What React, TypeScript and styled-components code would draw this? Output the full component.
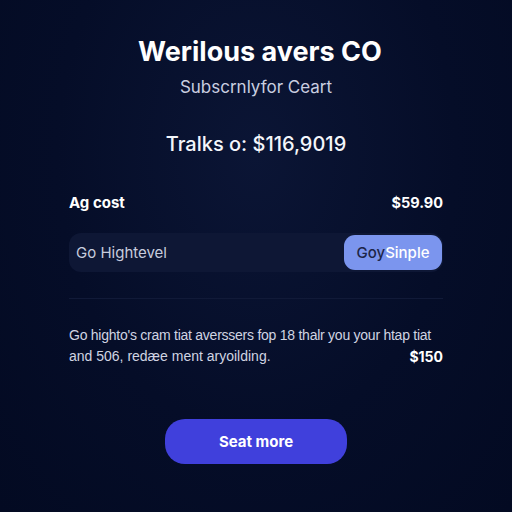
import React from "react";
import styled, { createGlobalStyle } from "styled-components";

const Global = createGlobalStyle`
  html, body { margin: 0; padding: 0; background: #030b25; }
  body { font-family: Inter, "Open Sans", "Liberation Sans", sans-serif; }
`;

const Page = styled.div`
  width: 512px;
  height: 512px;
  box-sizing: border-box;
  padding-top: 35px;
  display: flex;
  flex-direction: column;
  align-items: center;
  background: radial-gradient(ellipse at 50% 30%, #0b1535 0%, #050d28 55%, #030a22 100%);
  color: #ffffff;
`;

const Title = styled.h1`
  margin: 0 0 0 8px;
  font-size: 27px;
  line-height: 34px;
  font-weight: 700;
  color: #ffffff;
`;

const Subtitle = styled.div`
  margin-top: 6px;
  font-size: 17px;
  line-height: 24px;
  color: #c9cee0;
`;

const Total = styled.div`
  margin-top: 33px;
  font-size: 20px;
  line-height: 24px;
  font-weight: 500;
  color: #f4f6fb;
`;

const Section = styled.div`
  width: 374px;
  display: flex;
  flex-direction: column;
`;

const Row = styled.div<{ $top: number }>`
  margin-top: ${(p) => p.$top}px;
  display: flex;
  justify-content: space-between;
  align-items: flex-end;
  font-size: 15px;
  line-height: 20px;
`;

const Label = styled.span`
  font-weight: 700;
  color: #ffffff;
`;

const Amount = styled.span<{ $size?: number }>`
  font-family: Inter, "Liberation Sans", sans-serif;
  font-weight: 700;
  font-size: ${(p) => p.$size ?? 14.5}px;
  letter-spacing: 0;
  color: #ffffff;
`;

const Field = styled.div`
  margin-top: 20px;
  height: 39px;
  border-radius: 12px;
  background: #0e1735;
  display: flex;
  align-items: center;
  justify-content: space-between;
  padding: 0 1px 0 7px;
`;

const FieldText = styled.span`
  font-size: 15px;
  color: #c7ccdd;
`;

const FieldButton = styled.button`
  height: 35px;
  width: 98px;
  border: none;
  border-radius: 11px;
  background: #7b95ee;
  font-family: inherit;
  font-size: 15px;
  font-weight: 500;
  color: #ffffff;
  padding: 0;
`;

const Dark = styled.span`
  color: #1d2547;
`;

const Divider = styled.hr`
  margin: 26px 0 0;
  border: none;
  height: 1px;
  background: #111a38;
`;

const Paragraph = styled.div`
  margin-top: 26px;
  font-family: "Liberation Sans", Arial, sans-serif;
  font-size: 14px;
  line-height: 21px;
  white-space: nowrap;
  color: #d0d4e2;
`;

const FirstLine = styled.div`
  letter-spacing: -0.25px;
`;

const LastLine = styled.div`
  display: flex;
  justify-content: space-between;
`;

const Cta = styled.button`
  margin-top: 52px;
  width: 182px;
  height: 45px;
  border: none;
  border-radius: 20px;
  background: #4040dc;
  color: #ffffff;
  font-family: inherit;
  font-size: 15px;
  font-weight: 700;
`;

export default function App() {
  return (
    <>
      <Global />
      <Page>
        <Title>Werilous avers CO</Title>
        <Subtitle>Subscrnlyfor Ceart</Subtitle>
        <Total>Tralks o: $116,9019</Total>
        <Section>
          <Row $top={37}>
            <Label>Ag cost</Label>
            <Amount>$59.90</Amount>
          </Row>
          <Field>
            <FieldText>Go Hightevel</FieldText>
            <FieldButton>
              <Dark>Goy</Dark>Sinple
            </FieldButton>
          </Field>
          <Divider />
          <Paragraph>
            <FirstLine>Go highto's cram tiat averssers fop 18 thalr you your htap tiat</FirstLine>
            <LastLine>
              <span>and 506, redæe ment aryoilding.</span>
              <Amount $size={14}>$150</Amount>
            </LastLine>
          </Paragraph>
        </Section>
        <Cta>Seat more</Cta>
      </Page>
    </>
  );
}
